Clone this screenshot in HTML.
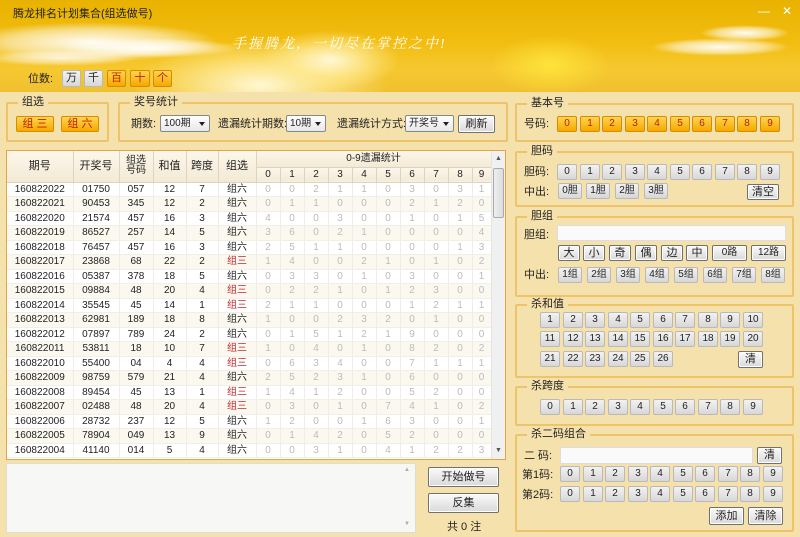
<!DOCTYPE html>
<html><head><meta charset="utf-8">
<style>
*{box-sizing:border-box;margin:0;padding:0}
body{width:800px;height:537px;overflow:hidden;position:relative;background:#f5e1ab;font-family:"Liberation Sans","Noto Sans CJK SC","WenQuanYi Zen Hei",sans-serif;font-size:11px;color:#222}
.a{position:absolute}
#banner{left:0;top:0;width:800px;height:92px;background:linear-gradient(180deg,#e9b200 0%,#f2bd10 45%,#f6c830 75%,#f0c030 100%);overflow:hidden}
.cloud{position:absolute;border-radius:50%;background:radial-gradient(ellipse at center,rgba(255,255,255,.95) 0%,rgba(255,255,255,.5) 45%,rgba(255,255,255,0) 70%)}
.glow{position:absolute;border-radius:50%;background:radial-gradient(ellipse at center,rgba(255,250,220,.95) 0%,rgba(255,235,150,.6) 40%,rgba(255,220,80,0) 70%)}
.gb{position:absolute;border:2px solid #efc36a;border-radius:2px}
.gb .t{position:absolute;top:-9px;left:10px;background:#f5e1ab;padding:0 4px;font-size:11px;color:#222;line-height:14px}
.lbl{position:absolute;font-size:11px;line-height:14px;white-space:nowrap}
.b{position:absolute;height:16px;border:1px solid #b9b9b9;border-radius:2px;background:linear-gradient(#f2f2f2,#d7d7d7);text-align:center;font-size:10px;line-height:14px;color:#222;white-space:nowrap;overflow:hidden}
.o{position:absolute;height:16px;border:1px solid #d88a00;border-radius:2px;background:linear-gradient(#ffd550,#f5a800);text-align:center;font-size:10px;line-height:14px;color:#c02000;white-space:nowrap}
.btn{position:absolute;border:1px solid #707070;border-radius:2px;background:linear-gradient(#fafafa,#d9d9d9);text-align:center;font-size:11px;box-shadow:inset 0 0 0 1px #fff;white-space:nowrap;overflow:hidden}
.sel{position:absolute;height:17px;border:1px solid #888;border-radius:2px;background:linear-gradient(#fff,#e8e8e8);font-size:10px;line-height:15px;padding-left:3px;white-space:nowrap}
.sel:after{content:"";position:absolute;right:4px;top:6px;border:3px solid transparent;border-top:4px solid #222}
#tbl{left:6px;top:150px;width:500px;height:310px;border:1px solid #e2a640;background:#fff;overflow:hidden}
table{border-collapse:collapse;table-layout:fixed;position:absolute;left:0;top:0}
td{height:14.5px;font-size:10px;text-align:center;padding:0;white-space:nowrap;line-height:13px;border-right:1px solid #f0ede6;overflow:hidden}
tr.r{height:14.5px}
tr.r td{border-bottom:1px solid #f2efe8}
tr.r.e td{background:#fbf8ef}
td.g{color:#bbb}
td.red{color:#c0282a}
th{font-weight:normal;font-size:11px;background:linear-gradient(#fdf7ea,#f3ead6);border-right:1px solid #dcd3c0;border-bottom:1px solid #dcd3c0;padding:0;line-height:13px;overflow:hidden}
.input{position:absolute;background:#fafafa;border:1px solid #ddd}
</style></head><body>
<div id="banner" class="a">
 <div class="cloud" style="left:-40px;top:22px;width:260px;height:40px"></div>
 <div class="cloud" style="left:60px;top:38px;width:180px;height:20px"></div>
 <div class="cloud" style="left:-20px;top:50px;width:160px;height:16px;opacity:.8"></div>
 <div class="glow" style="left:130px;top:40px;width:260px;height:90px"></div>
 <div class="glow" style="left:260px;top:30px;width:140px;height:60px"></div>
 <div class="cloud" style="left:700px;top:25px;width:90px;height:16px"></div>
 <div class="cloud" style="left:650px;top:38px;width:140px;height:18px"></div>
 <div class="a" style="left:490px;top:35px;width:120px;height:60px;border-radius:50%;background:radial-gradient(ellipse,rgba(255,230,60,.9),rgba(250,190,0,0) 70%)"></div>
 <div class="a" style="left:13px;top:5px;font-size:11px;color:#222">腾龙排名计划集合(组选做号)</div>
 <div class="a" style="left:232px;top:33px;font-size:14px;color:#fff;font-style:italic;letter-spacing:2px;font-family:'Liberation Serif','Noto Serif CJK SC',serif">手握腾龙，一切尽在掌控之中!</div>
 <div class="a" style="left:758px;top:4px;color:#fff;font-size:12px">—</div>
 <div class="a" style="left:782px;top:4px;color:#fff;font-size:12px">✕</div>
 <div class="lbl" style="left:28px;top:72px">位数:</div>
 <div class="b" style="left:62px;top:70px;width:19px;height:17px;line-height:15px;font-size:11px">万</div>
 <div class="b" style="left:84px;top:70px;width:19px;height:17px;line-height:15px;font-size:11px">千</div>
 <div class="o" style="left:107px;top:70px;width:19px;height:17px;line-height:15px;font-size:11px">百</div>
 <div class="o" style="left:130px;top:70px;width:20px;height:17px;line-height:15px;font-size:11px">十</div>
 <div class="o" style="left:153px;top:70px;width:19px;height:17px;line-height:15px;font-size:11px">个</div>
</div>

<div class="gb" style="left:6px;top:102px;width:103px;height:40px"><span class="t">组选</span></div>
<div class="o" style="left:16px;top:116px;width:38px;font-size:11px">组 三</div>
<div class="o" style="left:61px;top:116px;width:38px;font-size:11px">组 六</div>

<div class="gb" style="left:118px;top:102px;width:390px;height:40px"><span class="t">奖号统计</span></div>
<div class="lbl" style="left:131px;top:117px">期数:</div>
<div class="sel" style="left:160px;top:115px;width:50px">100期</div>
<div class="lbl" style="left:218px;top:117px">遗漏统计期数:</div>
<div class="sel" style="left:286px;top:115px;width:40px">10期</div>
<div class="lbl" style="left:337px;top:117px">遗漏统计方式:</div>
<div class="sel" style="left:405px;top:115px;width:49px">开奖号</div>
<div class="btn" style="left:458px;top:115px;width:37px;height:18px;line-height:16px">刷新</div>

<div id="tbl" class="a">
<table>
<colgroup><col style="width:66px"><col style="width:46px"><col style="width:34px"><col style="width:33px"><col style="width:32px"><col style="width:38px"><col style="width:24px"><col style="width:24px"><col style="width:24px"><col style="width:24px"><col style="width:24px"><col style="width:24px"><col style="width:24px"><col style="width:24px"><col style="width:24px"><col style="width:19px"></colgroup>
<tr style="height:16px"><th rowspan="2" style="height:31px">期号</th><th rowspan="2">开奖号</th><th rowspan="2" style="font-size:10px;line-height:10px">组选<br>号码</th><th rowspan="2">和值</th><th rowspan="2">跨度</th><th rowspan="2">组选</th><th colspan="10" style="font-size:10px">0-9遗漏统计</th></tr>
<tr style="height:15px"><th style="font-size:10px">0</th><th style="font-size:10px">1</th><th style="font-size:10px">2</th><th style="font-size:10px">3</th><th style="font-size:10px">4</th><th style="font-size:10px">5</th><th style="font-size:10px">6</th><th style="font-size:10px">7</th><th style="font-size:10px">8</th><th style="font-size:10px">9</th></tr>
<tr class="r"><td>160822022</td><td>01750</td><td>057</td><td>12</td><td>7</td><td>组六</td><td class="g">0</td><td class="g">0</td><td class="g">2</td><td class="g">1</td><td class="g">1</td><td class="g">0</td><td class="g">3</td><td class="g">0</td><td class="g">3</td><td class="g">1</td></tr>
<tr class="r e"><td>160822021</td><td>90453</td><td>345</td><td>12</td><td>2</td><td>组六</td><td class="g">0</td><td class="g">1</td><td class="g">1</td><td class="g">0</td><td class="g">0</td><td class="g">0</td><td class="g">2</td><td class="g">1</td><td class="g">2</td><td class="g">0</td></tr>
<tr class="r"><td>160822020</td><td>21574</td><td>457</td><td>16</td><td>3</td><td>组六</td><td class="g">4</td><td class="g">0</td><td class="g">0</td><td class="g">3</td><td class="g">0</td><td class="g">0</td><td class="g">1</td><td class="g">0</td><td class="g">1</td><td class="g">5</td></tr>
<tr class="r e"><td>160822019</td><td>86527</td><td>257</td><td>14</td><td>5</td><td>组六</td><td class="g">3</td><td class="g">6</td><td class="g">0</td><td class="g">2</td><td class="g">1</td><td class="g">0</td><td class="g">0</td><td class="g">0</td><td class="g">0</td><td class="g">4</td></tr>
<tr class="r"><td>160822018</td><td>76457</td><td>457</td><td>16</td><td>3</td><td>组六</td><td class="g">2</td><td class="g">5</td><td class="g">1</td><td class="g">1</td><td class="g">0</td><td class="g">0</td><td class="g">0</td><td class="g">0</td><td class="g">1</td><td class="g">3</td></tr>
<tr class="r e"><td>160822017</td><td>23868</td><td>68</td><td>22</td><td>2</td><td class="red">组三</td><td class="g">1</td><td class="g">4</td><td class="g">0</td><td class="g">0</td><td class="g">2</td><td class="g">1</td><td class="g">0</td><td class="g">1</td><td class="g">0</td><td class="g">2</td></tr>
<tr class="r"><td>160822016</td><td>05387</td><td>378</td><td>18</td><td>5</td><td>组六</td><td class="g">0</td><td class="g">3</td><td class="g">3</td><td class="g">0</td><td class="g">1</td><td class="g">0</td><td class="g">3</td><td class="g">0</td><td class="g">0</td><td class="g">1</td></tr>
<tr class="r e"><td>160822015</td><td>09884</td><td>48</td><td>20</td><td>4</td><td class="red">组三</td><td class="g">0</td><td class="g">2</td><td class="g">2</td><td class="g">1</td><td class="g">0</td><td class="g">1</td><td class="g">2</td><td class="g">3</td><td class="g">0</td><td class="g">0</td></tr>
<tr class="r"><td>160822014</td><td>35545</td><td>45</td><td>14</td><td>1</td><td class="red">组三</td><td class="g">2</td><td class="g">1</td><td class="g">1</td><td class="g">0</td><td class="g">0</td><td class="g">0</td><td class="g">1</td><td class="g">2</td><td class="g">1</td><td class="g">1</td></tr>
<tr class="r e"><td>160822013</td><td>62981</td><td>189</td><td>18</td><td>8</td><td>组六</td><td class="g">1</td><td class="g">0</td><td class="g">0</td><td class="g">2</td><td class="g">3</td><td class="g">2</td><td class="g">0</td><td class="g">1</td><td class="g">0</td><td class="g">0</td></tr>
<tr class="r"><td>160822012</td><td>07897</td><td>789</td><td>24</td><td>2</td><td>组六</td><td class="g">0</td><td class="g">1</td><td class="g">5</td><td class="g">1</td><td class="g">2</td><td class="g">1</td><td class="g">9</td><td class="g">0</td><td class="g">0</td><td class="g">0</td></tr>
<tr class="r e"><td>160822011</td><td>53811</td><td>18</td><td>10</td><td>7</td><td class="red">组三</td><td class="g">1</td><td class="g">0</td><td class="g">4</td><td class="g">0</td><td class="g">1</td><td class="g">0</td><td class="g">8</td><td class="g">2</td><td class="g">0</td><td class="g">2</td></tr>
<tr class="r"><td>160822010</td><td>55400</td><td>04</td><td>4</td><td>4</td><td class="red">组三</td><td class="g">0</td><td class="g">6</td><td class="g">3</td><td class="g">4</td><td class="g">0</td><td class="g">0</td><td class="g">7</td><td class="g">1</td><td class="g">1</td><td class="g">1</td></tr>
<tr class="r e"><td>160822009</td><td>98759</td><td>579</td><td>21</td><td>4</td><td>组六</td><td class="g">2</td><td class="g">5</td><td class="g">2</td><td class="g">3</td><td class="g">1</td><td class="g">0</td><td class="g">6</td><td class="g">0</td><td class="g">0</td><td class="g">0</td></tr>
<tr class="r"><td>160822008</td><td>89454</td><td>45</td><td>13</td><td>1</td><td class="red">组三</td><td class="g">1</td><td class="g">4</td><td class="g">1</td><td class="g">2</td><td class="g">0</td><td class="g">0</td><td class="g">5</td><td class="g">2</td><td class="g">0</td><td class="g">0</td></tr>
<tr class="r e"><td>160822007</td><td>02488</td><td>48</td><td>20</td><td>4</td><td class="red">组三</td><td class="g">0</td><td class="g">3</td><td class="g">0</td><td class="g">1</td><td class="g">0</td><td class="g">7</td><td class="g">4</td><td class="g">1</td><td class="g">0</td><td class="g">2</td></tr>
<tr class="r"><td>160822006</td><td>28732</td><td>237</td><td>12</td><td>5</td><td>组六</td><td class="g">1</td><td class="g">2</td><td class="g">0</td><td class="g">0</td><td class="g">1</td><td class="g">6</td><td class="g">3</td><td class="g">0</td><td class="g">0</td><td class="g">1</td></tr>
<tr class="r e"><td>160822005</td><td>78904</td><td>049</td><td>13</td><td>9</td><td>组六</td><td class="g">0</td><td class="g">1</td><td class="g">4</td><td class="g">2</td><td class="g">0</td><td class="g">5</td><td class="g">2</td><td class="g">0</td><td class="g">0</td><td class="g">0</td></tr>
<tr class="r"><td>160822004</td><td>41140</td><td>014</td><td>5</td><td>4</td><td>组六</td><td class="g">0</td><td class="g">0</td><td class="g">3</td><td class="g">1</td><td class="g">0</td><td class="g">4</td><td class="g">1</td><td class="g">2</td><td class="g">2</td><td class="g">3</td></tr>
</table>
<div class="a" style="left:484px;top:0;width:15px;height:308px;background:#f0f0f0;border-left:1px solid #e4e4e4"></div>
<div class="a" style="left:488px;top:4px;font-size:7px;color:#555">▲</div>
<div class="a" style="left:486px;top:17px;width:11px;height:50px;background:linear-gradient(90deg,#eee,#dcdcdc);border:1px solid #aaa;border-radius:2px"></div>
<div class="a" style="left:488px;top:296px;font-size:7px;color:#555">▼</div>
</div>

<div class="a" style="left:6px;top:463px;width:410px;height:70px;background:#f7f7f5;border:1px solid #e0dcd0"></div>
<div class="a" style="left:404px;top:467px;font-size:6px;color:#aaa">▲</div>
<div class="a" style="left:404px;top:521px;font-size:6px;color:#aaa">▼</div>
<div class="btn" style="left:428px;top:467px;width:71px;height:20px;line-height:18px">开始做号</div>
<div class="btn" style="left:428px;top:493px;width:71px;height:20px;line-height:18px">反集</div>
<div class="lbl" style="left:447px;top:520px">共 0 注</div>

<!-- right panels -->
<div class="gb" style="left:515px;top:103px;width:279px;height:39px"><span class="t">基本号</span></div>
<div class="lbl" style="left:524px;top:117px">号码:</div>
<div class="o" style="left:557px;top:116px;width:20px">0</div><div class="o" style="left:580px;top:116px;width:20px">1</div><div class="o" style="left:602px;top:116px;width:20px">2</div><div class="o" style="left:625px;top:116px;width:20px">3</div><div class="o" style="left:647px;top:116px;width:20px">4</div><div class="o" style="left:670px;top:116px;width:20px">5</div><div class="o" style="left:692px;top:116px;width:20px">6</div><div class="o" style="left:715px;top:116px;width:20px">7</div><div class="o" style="left:737px;top:116px;width:20px">8</div><div class="o" style="left:760px;top:116px;width:20px">9</div>

<div class="gb" style="left:515px;top:151px;width:279px;height:56px"><span class="t">胆码</span></div>
<div class="lbl" style="left:524px;top:165px">胆码:</div>
<div class="b" style="left:557px;top:164px;width:20px">0</div><div class="b" style="left:580px;top:164px;width:20px">1</div><div class="b" style="left:602px;top:164px;width:20px">2</div><div class="b" style="left:625px;top:164px;width:20px">3</div><div class="b" style="left:647px;top:164px;width:20px">4</div><div class="b" style="left:670px;top:164px;width:20px">5</div><div class="b" style="left:692px;top:164px;width:20px">6</div><div class="b" style="left:715px;top:164px;width:20px">7</div><div class="b" style="left:737px;top:164px;width:20px">8</div><div class="b" style="left:760px;top:164px;width:20px">9</div>
<div class="lbl" style="left:524px;top:185px">中出:</div>
<div class="b" style="left:558px;top:183px;width:24px">0胆</div><div class="b" style="left:586px;top:183px;width:24px">1胆</div><div class="b" style="left:615px;top:183px;width:24px">2胆</div><div class="b" style="left:644px;top:183px;width:24px">3胆</div>
<div class="btn" style="left:747px;top:184px;width:32px;height:16px;line-height:14px">清空</div>

<div class="gb" style="left:515px;top:216px;width:279px;height:81px"><span class="t">胆组</span></div>
<div class="lbl" style="left:524px;top:228px">胆组:</div>
<div class="input" style="left:557px;top:225px;width:229px;height:16px"></div>
<div class="btn" style="left:558px;top:245px;width:22px;height:16px;line-height:14px">大</div>
<div class="btn" style="left:583px;top:245px;width:22px;height:16px;line-height:14px">小</div>
<div class="btn" style="left:609px;top:245px;width:22px;height:16px;line-height:14px">奇</div>
<div class="btn" style="left:635px;top:245px;width:22px;height:16px;line-height:14px">偶</div>
<div class="btn" style="left:661px;top:245px;width:22px;height:16px;line-height:14px">边</div>
<div class="btn" style="left:686px;top:245px;width:22px;height:16px;line-height:14px">中</div>
<div class="btn" style="left:712px;top:245px;width:35px;height:16px;line-height:14px;font-size:10px">0路</div>
<div class="btn" style="left:751px;top:245px;width:35px;height:16px;line-height:14px;font-size:10px">12路</div>
<div class="lbl" style="left:524px;top:268px">中出:</div>
<div class="b" style="left:558px;top:267px;width:24px">1组</div><div class="b" style="left:587px;top:267px;width:24px">2组</div><div class="b" style="left:616px;top:267px;width:24px">3组</div><div class="b" style="left:645px;top:267px;width:24px">4组</div><div class="b" style="left:674px;top:267px;width:24px">5组</div><div class="b" style="left:703px;top:267px;width:24px">6组</div><div class="b" style="left:732px;top:267px;width:24px">7组</div><div class="b" style="left:761px;top:267px;width:24px">8组</div>

<div class="gb" style="left:515px;top:304px;width:279px;height:74px"><span class="t">杀和值</span></div>
<div class="b" style="left:540px;top:312px;width:20px">1</div><div class="b" style="left:563px;top:312px;width:20px">2</div><div class="b" style="left:585px;top:312px;width:20px">3</div><div class="b" style="left:608px;top:312px;width:20px">4</div><div class="b" style="left:630px;top:312px;width:20px">5</div><div class="b" style="left:653px;top:312px;width:20px">6</div><div class="b" style="left:675px;top:312px;width:20px">7</div><div class="b" style="left:698px;top:312px;width:20px">8</div><div class="b" style="left:720px;top:312px;width:20px">9</div><div class="b" style="left:743px;top:312px;width:20px">10</div>
<div class="b" style="left:540px;top:331px;width:20px">11</div><div class="b" style="left:563px;top:331px;width:20px">12</div><div class="b" style="left:585px;top:331px;width:20px">13</div><div class="b" style="left:608px;top:331px;width:20px">14</div><div class="b" style="left:630px;top:331px;width:20px">15</div><div class="b" style="left:653px;top:331px;width:20px">16</div><div class="b" style="left:675px;top:331px;width:20px">17</div><div class="b" style="left:698px;top:331px;width:20px">18</div><div class="b" style="left:720px;top:331px;width:20px">19</div><div class="b" style="left:743px;top:331px;width:20px">20</div>
<div class="b" style="left:540px;top:351px;width:20px">21</div><div class="b" style="left:563px;top:351px;width:20px">22</div><div class="b" style="left:585px;top:351px;width:20px">23</div><div class="b" style="left:608px;top:351px;width:20px">24</div><div class="b" style="left:630px;top:351px;width:20px">25</div><div class="b" style="left:653px;top:351px;width:20px">26</div>
<div class="btn" style="left:738px;top:351px;width:25px;height:17px;line-height:15px">清</div>

<div class="gb" style="left:515px;top:386px;width:279px;height:40px"><span class="t">杀跨度</span></div>
<div class="b" style="left:540px;top:399px;width:20px">0</div><div class="b" style="left:563px;top:399px;width:20px">1</div><div class="b" style="left:585px;top:399px;width:20px">2</div><div class="b" style="left:608px;top:399px;width:20px">3</div><div class="b" style="left:630px;top:399px;width:20px">4</div><div class="b" style="left:653px;top:399px;width:20px">5</div><div class="b" style="left:675px;top:399px;width:20px">6</div><div class="b" style="left:698px;top:399px;width:20px">7</div><div class="b" style="left:720px;top:399px;width:20px">8</div><div class="b" style="left:743px;top:399px;width:20px">9</div>

<div class="gb" style="left:515px;top:434px;width:279px;height:98px"><span class="t">杀二码组合</span></div>
<div class="lbl" style="left:524px;top:449px">二 码:</div>
<div class="input" style="left:560px;top:447px;width:193px;height:17px"></div>
<div class="btn" style="left:757px;top:447px;width:25px;height:17px;line-height:15px">清</div>
<div class="lbl" style="left:522px;top:468px">第1码:</div>
<div class="b" style="left:560px;top:466px;width:20px">0</div><div class="b" style="left:583px;top:466px;width:20px">1</div><div class="b" style="left:605px;top:466px;width:20px">2</div><div class="b" style="left:628px;top:466px;width:20px">3</div><div class="b" style="left:650px;top:466px;width:20px">4</div><div class="b" style="left:673px;top:466px;width:20px">5</div><div class="b" style="left:695px;top:466px;width:20px">6</div><div class="b" style="left:718px;top:466px;width:20px">7</div><div class="b" style="left:740px;top:466px;width:20px">8</div><div class="b" style="left:763px;top:466px;width:20px">9</div>
<div class="lbl" style="left:522px;top:488px">第2码:</div>
<div class="b" style="left:560px;top:486px;width:20px">0</div><div class="b" style="left:583px;top:486px;width:20px">1</div><div class="b" style="left:605px;top:486px;width:20px">2</div><div class="b" style="left:628px;top:486px;width:20px">3</div><div class="b" style="left:650px;top:486px;width:20px">4</div><div class="b" style="left:673px;top:486px;width:20px">5</div><div class="b" style="left:695px;top:486px;width:20px">6</div><div class="b" style="left:718px;top:486px;width:20px">7</div><div class="b" style="left:740px;top:486px;width:20px">8</div><div class="b" style="left:763px;top:486px;width:20px">9</div>
<div class="btn" style="left:709px;top:507px;width:35px;height:18px;line-height:16px">添加</div>
<div class="btn" style="left:748px;top:507px;width:35px;height:18px;line-height:16px">清除</div>
</body></html>
